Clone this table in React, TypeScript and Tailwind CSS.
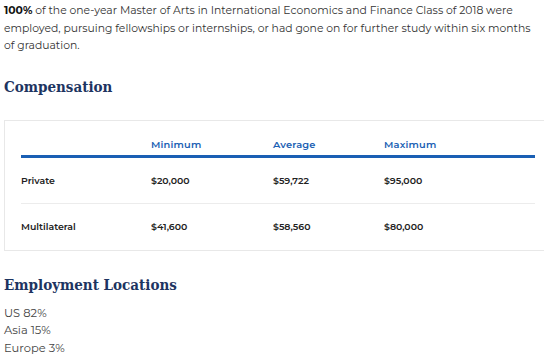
const rows = [
  { label: 'Private', min: '$20,000', avg: '$59,722', max: '$95,000' },
  { label: 'Multilateral', min: '$41,600', avg: '$58,560', max: '$80,000' },
]

const sans = "font-['Montserrat','DejaVu_Sans',sans-serif]"
const slab = "font-['DejaVu_Serif',serif] font-stretch-condensed"

export default function App() {
  return (
    <div className={`w-[544px] h-[354px] overflow-hidden bg-white pl-1 pt-[2px] text-[#333] ${sans}`}>
      <p className="text-[10.8px] leading-[17.5px] pr-1">
        <span className="font-bold text-[#111]">100%</span> of the one-year Master of Arts in International Economics and
        Finance Class of 2018 were employed, pursuing fellowships or internships, or had gone on for further study within six
        months of graduation.
      </p>

      <h2 className={`mt-[22px] text-[15px] leading-[20px] font-bold text-[#1d3461] ${slab}`}>Compensation</h2>

      <div className="mt-[23px] w-[548px] border border-[#e8e8e8] px-4">
        <div className="grid grid-cols-[130px_122px_111px_1fr] h-[37px] items-end pb-[4px] border-b-[3px] border-[#1a5fb4] text-[9.8px] leading-[12px] font-semibold text-[#1a5fb4] tracking-[0.2px]">
          <div />
          <div>Minimum</div>
          <div>Average</div>
          <div>Maximum</div>
        </div>
        {rows.map((r, i) => (
          <div
            key={r.label}
            className={`grid grid-cols-[130px_122px_111px_1fr] h-[46px] items-center pt-[2px] text-[9.4px] font-semibold text-[#222] ${
              i === 0 ? 'border-b border-[#ececec]' : ''
            }`}
          >
            <div>{r.label}</div>
            <div>{r.min}</div>
            <div>{r.avg}</div>
            <div>{r.max}</div>
          </div>
        ))}
      </div>

      <h2 className={`mt-[23px] text-[15px] leading-[22px] font-bold text-[#1d3461] ${slab}`}>Employment Locations</h2>

      <ul className="mt-[9px] text-[11.5px] leading-[17.5px] text-[#444]">
        <li>US 82%</li>
        <li>Asia 15%</li>
        <li>Europe 3%</li>
      </ul>
    </div>
  )
}
